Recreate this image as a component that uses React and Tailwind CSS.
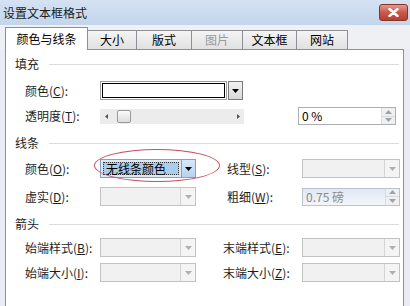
import React from 'react'

const font = { fontFamily: '"Noto Sans CJK SC", "Noto Sans", sans-serif' }

const Arrow = ({ color = '#000', dir = 'down' }) => (
	<svg width="7" height="4" viewBox="0 0 7 4" className={dir === 'up' ? 'rotate-180' : ''}>
		<path d="M0 0 L7 0 L3.5 4 Z" fill={color} />
	</svg>
)

const Label = ({ text, k, className = '' }) => (
	<div className={`text-[12px] text-[#1e1e1e] whitespace-nowrap ${className}`}>
		{text}(<u>{k}</u>):
	</div>
)

const Header = ({ text, className = '' }) => (
	<div className={`flex items-center h-[16px] pl-[9px] pr-[4px] ${className}`}>
		<span className="text-[12px] text-[#1e1e1e] leading-none">{text}</span>
		<div className="flex-1 ml-[10px] h-px bg-[#dcdcdc]" />
	</div>
)

const DisabledSelect = ({ w }) => (
	<div className={`flex h-[19px] border border-[#c2c2c2] bg-[#f1f1f1] ${w}`}>
		<div className="flex-1" />
		<div className="w-[15px] border-l border-[#d4d4d4] bg-[#f4f4f4] flex items-center justify-center">
			<Arrow color="#b0b0b0" />
		</div>
	</div>
)

const Spin = ({ value, disabled }) => (
	<div className={`flex h-[18px] w-[98px] border ${disabled ? 'border-[#b9c3cf] bg-gradient-to-b from-[#dfe8f4] to-[#f3f6fa]' : 'border-[#abadb3] bg-white'}`}>
		<div className={`flex-1 flex items-center pl-[3px] text-[12px] leading-none ${disabled ? 'text-[#8a8a8a]' : 'text-black'}`}>{value}</div>
		<div className="w-[14px] flex flex-col border-l border-[#dcdcdc] bg-[#f0f0f0]">
			<div className="flex-1 flex items-center justify-center border-b border-[#d8d8d8]"><Arrow color="#9aa4b0" dir="up" /></div>
			<div className="flex-1 flex items-center justify-center"><Arrow color="#9aa4b0" /></div>
		</div>
	</div>
)

export default function App() {
	const tabs = [
		{ t: '大小', w: 'w-[50px]' },
		{ t: '版式', w: 'w-[56px]' },
		{ t: '图片', w: 'w-[52px]', off: true },
		{ t: '文本框', w: 'w-[55px]' },
		{ t: '网站', w: 'w-[52px]' },
	]
	return (
		<div className="w-[410px] h-[306px] overflow-hidden bg-[#e9edf3] flex flex-col" style={font}>
			<div className="h-[25px] shrink-0 flex items-center justify-between pl-[3px] pr-[2px] bg-gradient-to-b from-[#d4e2f2] to-[#c3d5eb]">
				<span className="text-[12px] text-[#1a1a1a] leading-none">设置文本框格式</span>
				<div className="w-[29px] h-[17px] rounded-[3px] border border-[#8a3128] bg-gradient-to-b from-[#e39a8e] via-[#c8594a] to-[#b8402f] flex items-center justify-center">
					<svg width="11" height="9" viewBox="0 0 11 9">
						<path d="M1.5 1 L9.5 8 M9.5 1 L1.5 8" stroke="#fff" strokeWidth="2.4" strokeLinecap="round" />
					</svg>
				</div>
			</div>

			<div className="h-[24px] shrink-0 flex items-end pl-[5px] bg-[#eef0f3]">
				<div className="w-[83px] h-[23px] bg-white border border-b-0 border-[#8c8f96] flex items-center justify-center text-[12px] text-black relative top-px z-10">
					颜色与线条
				</div>
				{tabs.map((tab) => (
					<div
						key={tab.t}
						className={`${tab.w} h-[19px] -ml-px first:ml-0 border border-b-0 border-[#8c8f96] bg-gradient-to-b from-[#f4f4f4] to-[#e1e1e1] flex items-center justify-center text-[12px] ${tab.off ? 'text-[#9a9a9a]' : 'text-black'}`}
					>
						{tab.t}
					</div>
				))}
			</div>

			<div className="flex-1 ml-[5px] mr-[6px] bg-white border-l border-r border-t border-[#8c8f96] relative">
				<Header text="填充" className="mt-[6px]" />

				<div className="flex items-center h-[19px] mt-[9px]">
					<Label text="颜色" k="C" className="w-[94px] pl-[19px]" />
					<div className="w-[127px] h-[19px] border border-[#a0a0a0] p-px">
						<div className="w-full h-full border border-black bg-white" />
					</div>
					<div className="ml-[1px] w-[15px] h-[19px] border border-[#7a7a7a] bg-gradient-to-b from-[#f2f2f2] to-[#d9d9d9] flex items-center justify-center">
						<Arrow />
					</div>
				</div>

				<div className="flex items-center h-[18px] mt-[7px]">
					<Label text="透明度" k="T" className="w-[94px] pl-[19px]" />
					<div className="w-[144px] h-[15px] bg-[#ececec] flex items-center">
						<div className="w-[12px] flex justify-center"><svg width="3" height="5" viewBox="0 0 3 5"><path d="M3 0 L0 2.5 L3 5 Z" fill="#555" /></svg></div>
						<div className="ml-[5px] w-[14px] h-[13px] border border-[#9a9a9a] rounded-[2px] bg-gradient-to-b from-[#fbfbfb] to-[#dedede]" />
						<div className="flex-1" />
						<div className="w-[12px] flex justify-center"><svg width="3" height="5" viewBox="0 0 3 5"><path d="M0 0 L3 2.5 L0 5 Z" fill="#555" /></svg></div>
					</div>
					<div className="ml-[54px]">
						<Spin value="0 %" />
					</div>
				</div>

				<Header text="线条" className="mt-[10px]" />

				<div className="flex items-center h-[19px] mt-[8px]">
					<Label text="颜色" k="O" className="w-[94px] pl-[19px]" />
					<div className="w-[96px] h-[19px] border border-[#7aa4cc] bg-[#dbe9f7] flex">
						<div className="flex-1 m-[2px] bg-[#a9cdee] border border-dotted border-[#333] flex items-center pl-[2px] text-[12px] leading-none text-black">
							无线条颜色
						</div>
						<div className="w-[14px] border-l border-[#7aa4cc] bg-gradient-to-b from-[#d7e9f9] to-[#b5d4ef] flex items-center justify-center">
							<Arrow />
						</div>
					</div>
					<Label text="线型" k="S" className="ml-[31px] w-[75px]" />
					<DisabledSelect w="w-[98px]" />
				</div>

				<div className="flex items-center h-[19px] mt-[9px]">
					<Label text="虚实" k="D" className="w-[94px] pl-[19px]" />
					<DisabledSelect w="w-[96px]" />
					<Label text="粗细" k="W" className="ml-[31px] w-[75px]" />
					<Spin value="0.75 磅" disabled />
				</div>

				<Header text="箭头" className="mt-[10px]" />

				<div className="flex items-center h-[19px] mt-[6px]">
					<Label text="始端样式" k="B" className="w-[94px] pl-[19px]" />
					<DisabledSelect w="w-[96px]" />
					<Label text="末端样式" k="E" className="ml-[27px] w-[79px]" />
					<DisabledSelect w="w-[98px]" />
				</div>

				<div className="flex items-center h-[19px] mt-[6px]">
					<Label text="始端大小" k="I" className="w-[94px] pl-[19px]" />
					<DisabledSelect w="w-[96px]" />
					<Label text="末端大小" k="Z" className="ml-[27px] w-[79px]" />
					<DisabledSelect w="w-[98px]" />
				</div>

				<div className="absolute left-[88px] top-[99px] w-[126px] h-[33px] rounded-[50%] border-[1.5px] border-[#c9505c] pointer-events-none" />
			</div>
		</div>
	)
}
